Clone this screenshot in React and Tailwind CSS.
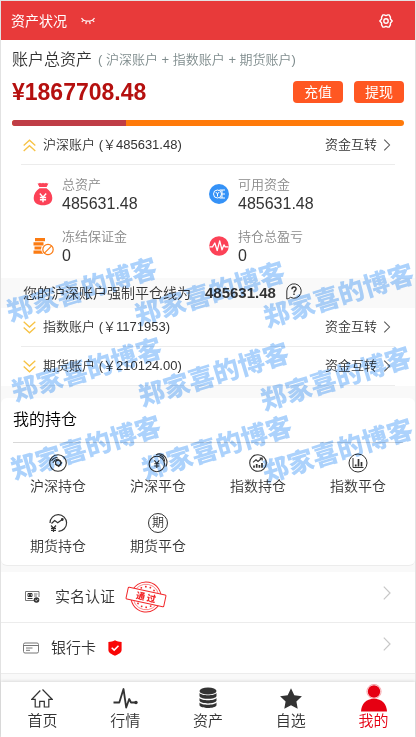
const accounts = [
    { id: 'index', name: '指数账户', amount: '1171953' },
    { id: 'futures', name: '期货账户', amount: '210124.00' },
];

const watermarks = [
    { id: 1, left: 81, top: 289 },
    { id: 2, left: 209, top: 293 },
    { id: 3, left: 338, top: 295 },
    { id: 4, left: 86, top: 369 },
    { id: 5, left: 213, top: 374 },
    { id: 6, left: 335, top: 378 },
    { id: 7, left: 85, top: 447 },
    { id: 8, left: 216, top: 447 },
    { id: 9, left: 337, top: 450 },
];

function EyeClosedIcon() {
    return (
        <svg width="14" height="8" viewBox="0 0 14 8" fill="none" stroke="#fff" strokeWidth="1.2">
            <path d="M.5 1C3 5.2 11 5.2 13.5 1M2.6 3 .8 4.8M5.4 4.4 4.8 7M8.6 4.4 9.2 7M11.4 3l1.8 1.8" />
        </svg>
    );
}

function GearIcon() {
    return (
        <svg width="14" height="14" viewBox="0 0 14 14" fill="none" stroke="#fff" strokeWidth="1.4" strokeLinejoin="round">
            <path d="M3.900.9h1.200L7 1.700l1.900-.8h1.200l1.300 2.300v1.900L13.200 7l-1.800 1.900v1.900l-1.300 2.300H8.900L7 12.300l-1.900.8H3.900l-1.300-2.300V8.900L.8 7l1.800-1.900V3.200z" />
            <circle cx="7" cy="7" r="2.200" />
        </svg>
    );
}

function DoubleChevron({ up }) {
    return (
        <svg width="13" height="13" viewBox="0 0 13 13" fill="none" stroke="#f7c244" strokeWidth="1.3">
            <path d={up ? 'M.7 6.5 6.5 1.2l5.800 5.3M.7 12l5.800-5.3 5.800 5.3' : 'M.7.8l5.800 5.3L12.300.8M.7 6.500l5.800 5.300 5.800-5.300'} />
        </svg>
    );
}

function ChevronRight({ className }) {
    return (
        <svg className={className} viewBox="0 0 8 14" fill="none" stroke="currentColor" strokeWidth="1.2">
            <path d="M.8.7 7 7 .8 13.3" />
        </svg>
    );
}

function MoneyBagIcon() {
    return (
        <svg width="20" height="24" viewBox="0 0 20 24">
            <path d="M4.500 1.200c1 .8 1.800.1 2.500-.5 1 .8 2 .8 3 0 1 .8 2 .8 3 0 .7.6 1.500 1.300 2.500.5L13.600 5H6.400zM6.500 6.200h7C17 8.500 19.300 12 19.300 16c0 5-3.800 7.300-9.300 7.300S.7 21 .7 16c0-4 2.300-7.500 5.800-9.800z" fill="#fc4257" />
            <path d="M6.800 11.500 10 15.200l3.200-3.700M10 15v5.200M6.900 15.500h6.200M6.900 17.800h6.200" fill="none" stroke="#fff" strokeWidth="1.400" />
        </svg>
    );
}

function AvailableIcon() {
    return (
        <svg width="20" height="20" viewBox="0 0 20 20" fill="none" stroke="#fff" strokeWidth="1">
            <circle cx="10" cy="10" r="10" fill="#3592f7" stroke="none" />
            <circle cx="8.500" cy="10" r="4" />
            <path d="m6.800 8 1.700 2 1.700-2M8.500 10v2.500M10.500 6H16M13 6v8M13 10h3M10.500 14H16" />
        </svg>
    );
}

function FrozenIcon() {
    return (
        <svg width="21" height="19" viewBox="0 0 21 19">
            <path d="M2 1h10v3.200H2zM.5 5.200h10v3.200H.5zM1.500 9.400h7.300c-.6 1-.8 2-.8 3.200H1.500zM.5 13.600h7.800c.4 1.400 1 2.400 2 3.200H.5z" fill="#fb7b12" />
            <g fill="none" stroke="#fb7b12" strokeWidth="1.200">
                <circle cx="15" cy="12.500" r="5.200" />
                <path d="m11.400 16.100 7.200-7.200" />
            </g>
        </svg>
    );
}

function ProfitIcon() {
    return (
        <svg width="20" height="20" viewBox="0 0 20 20">
            <circle cx="10" cy="10" r="9.800" fill="#fc4257" />
            <path d="M.5 10.800h3L5.800 7l2.400 7.500L10.700 4.800l2.300 9 2-5 1.200 2h3.300" fill="none" stroke="#fff" strokeWidth="1.300" strokeLinejoin="round" />
        </svg>
    );
}

function HelpIcon() {
    return (
        <svg width="16" height="17" viewBox="0 0 16 17" fill="none" stroke="#333" strokeWidth="1">
            <path d="M.8 16V8a7.200 7.200 0 1 1 3.700 6.300C3.500 15.300 2.300 15.900.8 16z" />
            <path d="M5.900 6.300C6 3.200 10.300 3.300 10.100 6c-.1 1.600-2.100 1.700-2.100 3.500M8 10.600V12" strokeWidth="1.400" />
        </svg>
    );
}

function StockHoldIcon() {
    return (
        <svg width="20" height="20" viewBox="0 0 20 20" fill="none" stroke="#333" strokeWidth="1.100">
            <circle cx="10" cy="10" r="8.300" />
            <circle cx="10.200" cy="9.800" r="2.700" />
            <path d="M3.500 7.800C5 5.500 7 4.300 9.500 4.500M4.800 9.700C6 7.500 7.500 6.400 9.800 6l3.700 3.700-2.700 3.800L7 10.800" />
        </svg>
    );
}

function StockCloseIcon() {
    return (
        <svg width="20" height="20" viewBox="0 0 20 20" fill="none" stroke="#333" strokeWidth="1.100">
            <circle cx="8.800" cy="11" r="7.700" />
            <path d="M8 1.900c2-1.300 5-1.200 7.400.4 3.700 2.600 4.600 7.700 2.400 11.200M11.500 2.300c2.700.6 5 3 5.200 6.200M6.300 7.300l2.500 3 2.500-3M8.800 10v5M6.300 10.800h5M6.300 13h5" />
        </svg>
    );
}

function IndexHoldIcon() {
    return (
        <svg width="20" height="20" viewBox="0 0 20 20" fill="none" stroke="#333" strokeWidth="1.100">
            <circle cx="10" cy="10" r="8.300" />
            <path d="m5 9.300 3-2.500 2 1.700L14 5M11.700 5h2.500v2.400" />
            <path d="M6 12.500v2.300M8.700 11v3.800M11.400 12v2.800M14 10v4.800" strokeWidth="1.700" />
        </svg>
    );
}

function IndexCloseIcon() {
    return (
        <svg width="20" height="20" viewBox="0 0 20 20" fill="none" stroke="#333" strokeWidth="1">
            <circle cx="10" cy="10" r="9" />
            <path d="M5 5v9.500h10.500" />
            <path d="M7.700 11.500v2M10.500 6v7.500M13.500 9v4.500" strokeWidth="1.700" />
        </svg>
    );
}

function FuturesHoldIcon() {
    return (
        <svg width="20" height="20" viewBox="0 0 20 20" fill="none" stroke="#333" strokeWidth="1.200">
            <path d="M2 10A8.300 8.300 0 1 1 10.500 18.300" />
            <path d="m3.500 10.500 3.200-3 3 2.200 4.600-3.200" />
            <circle cx="14.300" cy="6.500" r=".8" fill="#333" />
            <path d="m3 12.500 2.500 2.700L8 12.500M5.500 15v4M3 15.400h5M3 17.300h5" />
        </svg>
    );
}

function FuturesCloseIcon() {
    return (
        <span className="flex size-5 items-center justify-center rounded-full border border-[#333] text-xs leading-none text-[#333]">
            期
        </span>
    );
}

const holdings = [
    { label: '沪深持仓', Icon: StockHoldIcon },
    { label: '沪深平仓', Icon: StockCloseIcon },
    { label: '指数持仓', Icon: IndexHoldIcon },
    { label: '指数平仓', Icon: IndexCloseIcon },
    { label: '期货持仓', Icon: FuturesHoldIcon },
    { label: '期货平仓', Icon: FuturesCloseIcon },
];

function IdCardIcon() {
    return (
        <svg width="16" height="14" viewBox="0 0 16 14" fill="none" stroke="#777" strokeWidth="1">
            <path d="M9.500 10.500h-9v-9h13.500V7" />
            <path d="M9 4h3.500M9 6h3" />
            <path d="M2.500 8.500h5M3 3.500h4v3H3z" stroke="#333" />
            <path d="M4.500 4.500h1v2h-1z" fill="#333" stroke="#333" />
            <circle cx="11.500" cy="10" r="2.800" fill="#333" stroke="none" />
            <path d="m10.200 9.800 1.100 1.100 1.800-1.800" stroke="#fff" strokeWidth=".8" />
        </svg>
    );
}

function BankCardIcon() {
    return (
        <svg width="16" height="12" viewBox="0 0 16 12" fill="none" stroke="#777" strokeWidth="1">
            <rect x=".5" y="1" width="15" height="10" rx="1.500" />
            <path d="M.5 3.500h15M3 6h6.500M3 8.300h4" />
        </svg>
    );
}

function PassedStamp() {
    return (
        <svg width="42" height="34" viewBox="-21 -17 42 34" role="img" aria-label="通过">
            <g transform="rotate(12)" fill="none" stroke="#f2282b" strokeWidth="1">
                <circle r="15" />
                <circle r="12.800" strokeWidth=".5" />
                <g fill="#f2282b" stroke="none">
                    <circle cx="-6.500" cy="-8" r=".9" />
                    <circle cx="-2.300" cy="-10" r=".9" />
                    <circle cx="2.300" cy="-10" r=".9" />
                    <circle cx="6.500" cy="-8" r=".9" />
                    <circle cx="-6.500" cy="8" r=".9" />
                    <circle cx="-2.300" cy="10" r=".9" />
                    <circle cx="2.300" cy="10" r=".9" />
                    <circle cx="6.500" cy="8" r=".9" />
                </g>
                <rect x="-19.300" y="-6" width="38.600" height="12" rx="1" fill="#fff" />
                <text x="-10" y="3.500" fill="#f2282b" stroke="none" fontSize="9" fontWeight="900">通</text>
                <text x="1" y="3.500" fill="#f2282b" stroke="none" fontSize="9" fontWeight="900">过</text>
            </g>
        </svg>
    );
}

function ShieldIcon() {
    return (
        <svg width="14" height="16" viewBox="0 0 14 16">
            <path d="M7 .3c2 1.200 4 1.700 6.600 1.700v8c0 3-3.600 4.300-6.600 5.800C4 14.300.4 13 .4 10V2C3 2 5 1.500 7 .3z" fill="#f90606" />
            <path d="m3.700 7.700 2.500 2.400 4.300-4.300" fill="none" stroke="#fff" strokeWidth="1.500" />
        </svg>
    );
}

function HomeIcon() {
    return (
        <svg width="22" height="20" viewBox="0 0 22 20" fill="none" stroke="#333" strokeWidth="1.200">
            <path d="M9.300 2.500.9 11.300h3.300V19h4.500v-5.700h4.600V19h4.500v-7.700h3.300L11.500 1.500" />
        </svg>
    );
}

function PulseIcon() {
    return (
        <svg width="25" height="21" viewBox="0 0 25 21" fill="none" stroke="#333" strokeWidth="1.800" strokeLinejoin="round">
            <path d="M.5 14.500h5.800L10.500 1l2.700 18.500 3-8.500 1.800 3.500h5" />
            <circle cx="23" cy="14.500" r="1.700" fill="#333" stroke="none" />
        </svg>
    );
}

function CoinsIcon() {
    return (
        <svg width="18" height="22" viewBox="0 0 18 22" fill="#333">
            <ellipse cx="9" cy="4" rx="8.500" ry="3.600" />
            <path d="M.5 6c2 3 15 3 17 0v3.200c-1.500 3.500-15.500 3.500-17 0zM.5 11c2 3 15 3 17 0v2.800c-1.500 3.500-15.500 3.500-17 0zM.5 15.600c2 3 15 3 17 0v2.600c-1.500 3.700-15.500 3.700-17 0z" />
        </svg>
    );
}

function StarIcon() {
    return (
        <svg width="22" height="21" viewBox="0 0 22 21" fill="#333">
            <path d="m11 .3 3.300 6.900 7.600 1-5.500 5.200 1.300 7.400L11 17.200l-6.700 3.600 1.300-7.400L.1 8.200l7.600-1z" />
        </svg>
    );
}

function UserIcon() {
    return (
        <svg width="28" height="28" viewBox="0 0 28 28" fill="#e60012">
            <circle cx="14" cy="7.500" r="6.200" />
            <circle cx="14" cy="7.500" r="7.100" fill="none" stroke="#f06a74" strokeWidth=".6" />
            <path d="M1 27.500c.5-8 5-12.800 13-12.800s12.500 4.800 13 12.800z" />
        </svg>
    );
}

const tabs = [
    { label: '首页', Icon: HomeIcon },
    { label: '行情', Icon: PulseIcon },
    { label: '资产', Icon: CoinsIcon },
    { label: '自选', Icon: StarIcon },
    { label: '我的', Icon: UserIcon, active: true },
];

function AccountRow({ name, amount, open }) {
    return (
        <div className="mx-5 flex h-[39px] items-center justify-between border-b border-[#ececec] pr-1 pl-0.5 text-[13px] text-[#333]">
            <button type="button" aria-expanded={open} className="flex items-center gap-[7px]">
                <DoubleChevron up={open} />
                <span>{name} (￥{amount})</span>
            </button>
            <a href="#transfer" className="flex items-center gap-1.5">
                资金互转
                <ChevronRight className="h-3 w-2 text-[#555]" />
            </a>
        </div>
    );
}

function Stat({ Icon, label, value }) {
    return (
        <div className="flex items-center gap-[7px]">
            <span className="flex w-6 justify-center">
                <Icon />
            </span>
            <div>
                <p className="text-[13px] leading-5 text-[#888]">{label}</p>
                <p className="text-base leading-[18px] text-[#333]">{value}</p>
            </div>
        </div>
    );
}

export default function App() {
    return (
        <div className="relative flex min-h-screen flex-col border-t border-r border-l border-[#e2e2e2] bg-[#f9f9f9] font-['Liberation_Sans','Noto_Sans_CJK_SC',sans-serif] font-[350]">
            <header className="flex h-[39px] items-center bg-[#e83a3a] px-2.5 text-sm font-normal text-white">
                <h1>资产状况</h1>
                <button type="button" aria-label="隐藏金额" className="ml-3.5">
                    <EyeClosedIcon />
                </button>
                <a href="#settings" aria-label="设置" className="mr-3 ml-auto">
                    <GearIcon />
                </a>
            </header>

            <section className="bg-white">
                <div className="px-[11px] pt-2">
                    <p className="flex items-center gap-1.5 leading-6 whitespace-nowrap text-[#333]">
                        账户总资产
                        <small className="text-[13px] text-[#7f8c8d]">( 沪深账户 + 指数账户 + 期货账户)</small>
                    </p>
                    <div className="mt-1.5 flex items-center gap-[11px]">
                        <strong className="mr-auto text-[23px] leading-7 font-bold text-[#b5100f]">¥1867708.48</strong>
                        <button type="button" className="h-[22px] w-[50px] rounded bg-[#ff5722] text-sm leading-none font-normal text-white">
                            充值
                        </button>
                        <button type="button" className="h-[22px] w-[50px] rounded bg-[#ff5722] text-sm leading-none font-normal text-white">
                            提现
                        </button>
                    </div>
                    <div className="mt-3.5 flex h-1.5 overflow-hidden rounded-full bg-[#ff7a0a]">
                        <div className="w-[29%] bg-[#bf3d46]" />
                    </div>
                </div>

                <AccountRow name="沪深账户" amount="485631.48" open />
                <div className="grid grid-cols-2 gap-y-3.5 py-2.5 pr-8 pl-[30px]">
                    <Stat Icon={MoneyBagIcon} label="总资产" value="485631.48" />
                    <Stat Icon={AvailableIcon} label="可用资金" value="485631.48" />
                    <Stat Icon={FrozenIcon} label="冻结保证金" value="0" />
                    <Stat Icon={ProfitIcon} label="持仓总盈亏" value="0" />
                </div>
                <div className="mt-[3px] flex h-[30px] items-center bg-[#f9f9f9] pl-[22px] text-sm text-[#333]">
                    您的沪深账户强制平仓线为
                    <b className="mr-2.5 ml-3.5 text-[15px] font-bold">485631.48</b>
                    <button type="button" aria-label="说明" className="mb-1">
                        <HelpIcon />
                    </button>
                </div>
                {accounts.map((account) => (
                    <AccountRow key={account.id} name={account.name} amount={account.amount} open={false} />
                ))}
            </section>

            <section className="mt-3 rounded-md border-b border-[#ececec] bg-white pt-1.5 pb-2">
                <h2 className="mx-3 border-b border-[#d8d8d8] pt-1 pb-2.5 text-base leading-6 font-[350] text-black">我的持仓</h2>
                <div className="grid grid-cols-4 gap-y-4 px-[7px] pt-2.5">
                    {holdings.map(({ label, Icon }) => (
                        <a key={label} href="#holdings" className="flex flex-col items-center gap-0.5 text-sm leading-[22px] text-[#333]">
                            <Icon />
                            {label}
                        </a>
                    ))}
                </div>
            </section>

            <section className="mt-1.5 bg-white text-[15px] text-[#333]">
                <a href="#identity" className="flex h-[51px] items-center border-b border-[#ececec] pr-6 pl-6">
                    <IdCardIcon />
                    <span className="mr-2.5 ml-3.5">实名认证</span>
                    <PassedStamp />
                    <ChevronRight className="mb-2 ml-auto h-3.5 w-2 text-[#c7c7c7]" />
                </a>
                <a href="#cards" className="flex h-[51px] items-center border-b border-[#ececec] pr-6 pl-[22px]">
                    <BankCardIcon />
                    <span className="mr-3 ml-3">银行卡</span>
                    <ShieldIcon />
                    <ChevronRight className="mb-2 ml-auto h-3.5 w-2 text-[#c7c7c7]" />
                </a>
            </section>

            <nav className="mt-auto grid grid-cols-5 bg-white pt-0.5 pb-[7px] shadow-[0_-1px_3px_rgba(0,0,0,0.12)]">
                {tabs.map(({ label, Icon, active }) => (
                    <a
                        key={label}
                        href="#tab"
                        aria-current={active ? 'page' : undefined}
                        className={`flex flex-col items-center text-[15px] leading-[18px] ${active ? 'text-[#e60012]' : 'text-[#333]'}`}
                    >
                        <span className="flex h-7 items-center">
                            <Icon />
                        </span>
                        {label}
                    </a>
                ))}
            </nav>

            <div aria-hidden="true" className="pointer-events-none absolute inset-0 overflow-hidden mix-blend-multiply">
                {watermarks.map((mark) => (
                    <span
                        key={mark.id}
                        className="absolute -translate-x-1/2 -translate-y-1/2 rotate-[-17deg] text-[26px] leading-none font-black whitespace-nowrap text-[#acd2fc]"
                        style={{ left: mark.left, top: mark.top }}
                    >
                        郑家喜的博客
                    </span>
                ))}
            </div>
        </div>
    );
}
